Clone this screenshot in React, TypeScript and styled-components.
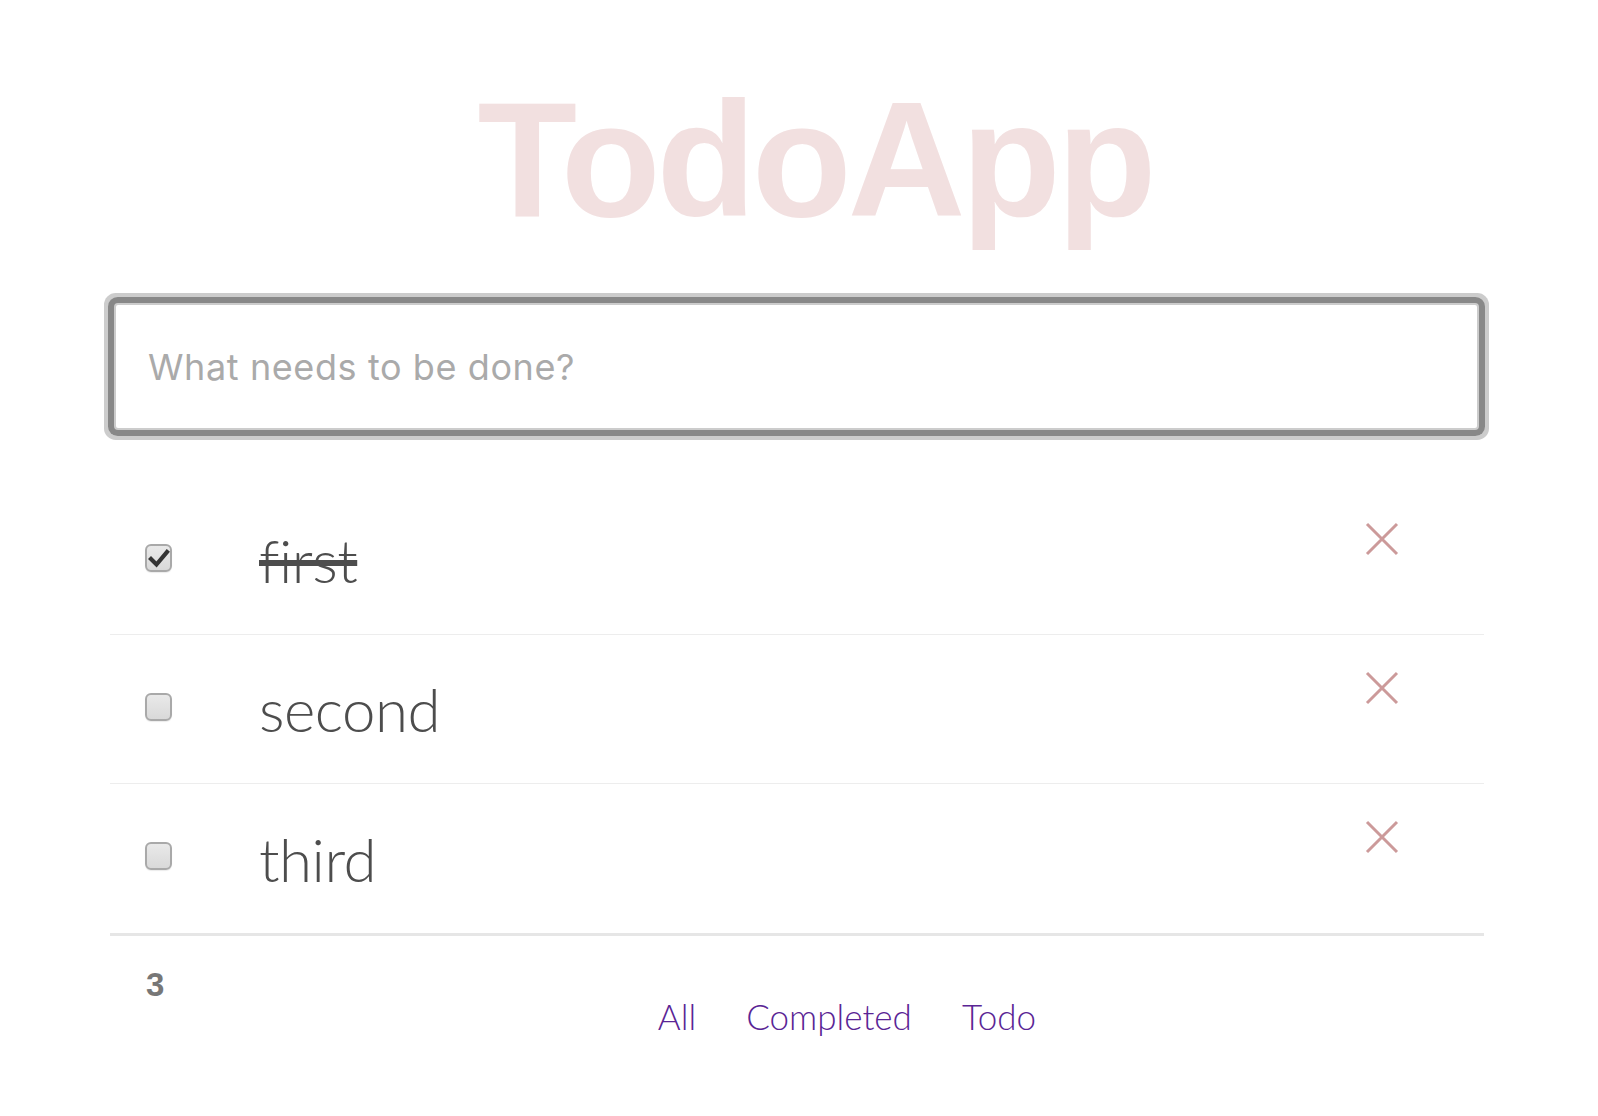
import { FC } from "react"
import styled, { createGlobalStyle } from "styled-components"

type Todo = {
	id: number
	title: string
	completed: boolean
}

type DoneProps = {
	done: boolean
}

const todos: Todo[] = [
	{ id: 1, title: "first", completed: true },
	{ id: 2, title: "second", completed: false },
	{ id: 3, title: "third", completed: false }
]

const App: FC = () => {
	return (
		<Page>
			<GlobalStyle />
			<Title>TodoApp</Title>
			<Main>
				<NewTodo placeholder="What needs to be done?" />
				<List>
					{todos.map((todo, index) => (
						<Item key={todo.id} last={index === todos.length - 1}>
							<Check done={todo.completed}>
								{todo.completed && (
									<svg width="27" height="28" viewBox="0 0 27 28">
										<path
											d="M6 15 L11.5 20.5 L22 8"
											fill="none"
											stroke="#333"
											strokeWidth="4.2"
											strokeLinecap="square"
										/>
									</svg>
								)}
							</Check>
							<Label done={todo.completed}>{todo.title}</Label>
							<Destroy type="button" aria-label="delete">
								<svg width="34" height="34" viewBox="0 0 34 34">
									<path
										d="M2 2 L32 32 M32 2 L2 32"
										stroke="#cc9a9a"
										strokeWidth="3"
									/>
								</svg>
							</Destroy>
						</Item>
					))}
				</List>
				<Footer>
					<Count>{todos.length}</Count>
					<Filters>
						<FilterLink href="#/">All</FilterLink>
						<FilterLink href="#/completed">Completed</FilterLink>
						<FilterLink href="#/active">Todo</FilterLink>
					</Filters>
				</Footer>
			</Main>
		</Page>
	)
}

const GlobalStyle = createGlobalStyle`
	html, body {
		margin: 0;
		padding: 0;
		background: #fff;
	}
	* {
		box-sizing: border-box;
	}
`

const Page = styled.div`
	padding-top: 78px;
	font-family: "Liberation Sans", Arial, sans-serif;
`

const Title = styled.h1`
	margin: 0 0 62px;
	padding-left: 32px;
	text-align: center;
	font-family: "Liberation Sans", Arial, sans-serif;
	font-weight: 700;
	font-size: 163px;
	line-height: 1;
	letter-spacing: -4px;
	color: #f2e0e0;
`

const Main = styled.section`
	width: 1380px;
	margin: 0 auto;
`

const NewTodo = styled.input`
	display: block;
	width: 1365px;
	height: 127px;
	margin: 0 10px 0 5px;
	padding: 0 32px;
	border: 2px solid #ccc;
	border-radius: 4px;
	box-shadow: 0 0 0 6px #888, 0 0 0 10px #ccc;
	outline: none;
	font-family: Inter, "Liberation Sans", sans-serif;
	font-size: 36px;
	letter-spacing: 0.6px;
	color: #4d4d4d;

	&::placeholder {
		color: #aaa;
	}
`

const List = styled.ul`
	list-style: none;
	margin: 56px 5px 0 1px;
	padding: 0;
`

const Item = styled.li<{ last: boolean }>`
	display: flex;
	align-items: center;
	height: 149px;
	border-bottom: ${props => (props.last ? "none" : "1px solid #ededed")};
`

const Check = styled.span<DoneProps>`
	flex: 0 0 auto;
	display: block;
	width: 27px;
	height: 28px;
	margin-left: 35px;
	margin-top: -5px;
	border: 2px solid #a9a9a9;
	border-radius: 6px;
	background: linear-gradient(#e9e9e9, #d9d9d9);
	box-shadow: 0 1px 1px rgba(0, 0, 0, 0.08);
	position: relative;

	svg {
		position: absolute;
		left: -2px;
		top: -2px;
	}
`

const Label = styled.label<DoneProps>`
	flex: 1;
	padding: 0 0 0 87px;
	font-family: Lato, "Liberation Sans", sans-serif;
	font-weight: 300;
	font-size: 60px;
	line-height: 72px;
	font-variant-ligatures: none;
	letter-spacing: -0.5px;
	color: #4d4d4d;
	text-decoration: ${props => (props.done ? "line-through" : "none")};
`

const Destroy = styled.button`
	align-self: flex-start;
	margin: 36px 85px 0 0;
	padding: 0;
	border: none;
	background: none;
	width: 34px;
	height: 34px;
	cursor: pointer;

	svg {
		display: block;
	}
`

const Footer = styled.footer`
	display: flex;
	align-items: flex-start;
	margin: 0 5px 0 1px;
	padding-top: 30px;
	border-top: 3px solid #e6e6e6;
	height: 180px;
`

const Count = styled.span`
	flex: 0 0 100px;
	padding-left: 36px;
	font-family: "Liberation Sans", Arial, sans-serif;
	font-weight: 700;
	font-size: 33px;
	color: #777;
`

const Filters = styled.div`
	flex: 1;
	display: flex;
	justify-content: center;
	gap: 50px;
	margin-top: 29px;
`

const FilterLink = styled.a`
	font-family: Lato, "Liberation Sans", sans-serif;
	font-weight: 300;
	font-size: 35px;
	color: #5a2595;
	text-decoration: none;
`

export default App
